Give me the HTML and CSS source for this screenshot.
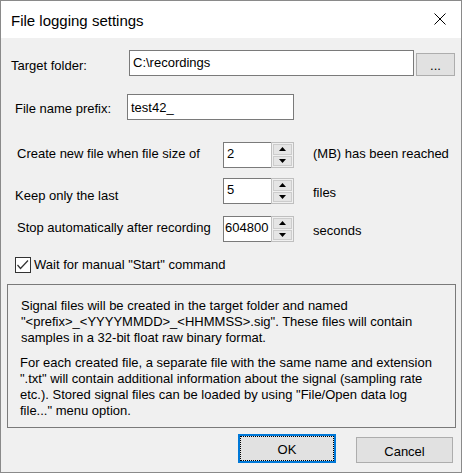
FILE: index.html
```html
<!DOCTYPE html>
<html>
<head>
<meta charset="utf-8">
<link rel="stylesheet" href="styles.css">
</head>
<body>
<div class="window">
  <div class="titlebar">
    <span class="title">File logging settings</span>
    <svg class="close" width="12" height="12" viewBox="0 0 12 12"><path d="M0.5 0.5 L11.5 11.5 M11.5 0.5 L0.5 11.5" stroke="#000" stroke-width="1" fill="none"/></svg>
  </div>
  <div class="content">
    <div class="row row1">
      <span class="lbl lbl-target">Target folder:</span>
      <div class="field field-target">C:\recordings</div>
      <div class="btn browse">...</div>
    </div>
    <div class="row row2">
      <span class="lbl lbl-prefix">File name prefix:</span>
      <div class="field field-prefix">test42_</div>
    </div>
    <div class="row row3">
      <span class="lbl lbl-size">Create new file when file size of</span>
      <div class="spin">
        <span class="spin-val">2</span>
        <span class="spin-btns">
          <span class="sb"><svg width="7" height="4" viewBox="0 0 7 4"><polygon points="0,4 3.5,0 7,4" fill="#000"/></svg></span>
          <span class="sb"><svg width="7" height="4" viewBox="0 0 7 4"><polygon points="0,0 7,0 3.5,4" fill="#000"/></svg></span>
        </span>
      </div>
      <span class="suffix suffix-size">(MB) has been reached</span>
    </div>
    <div class="row row4">
      <span class="lbl lbl-keep">Keep only the last</span>
      <div class="spin">
        <span class="spin-val">5</span>
        <span class="spin-btns">
          <span class="sb"><svg width="7" height="4" viewBox="0 0 7 4"><polygon points="0,4 3.5,0 7,4" fill="#000"/></svg></span>
          <span class="sb"><svg width="7" height="4" viewBox="0 0 7 4"><polygon points="0,0 7,0 3.5,4" fill="#000"/></svg></span>
        </span>
      </div>
      <span class="suffix suffix-keep">files</span>
    </div>
    <div class="row row5">
      <span class="lbl lbl-stop">Stop automatically after recording</span>
      <div class="spin">
        <span class="spin-val tight">604800</span>
        <span class="spin-btns">
          <span class="sb"><svg width="7" height="4" viewBox="0 0 7 4"><polygon points="0,4 3.5,0 7,4" fill="#000"/></svg></span>
          <span class="sb"><svg width="7" height="4" viewBox="0 0 7 4"><polygon points="0,0 7,0 3.5,4" fill="#000"/></svg></span>
        </span>
      </div>
      <span class="suffix suffix-stop">seconds</span>
    </div>
    <div class="check-row">
      <span class="checkbox"><svg width="14" height="14" viewBox="0 0 14 14"><polyline points="1.5,7 4.5,10.5 12,2.5" fill="none" stroke="#333" stroke-width="1.2"/></svg></span>
      <span class="check-label">Wait for manual "Start" command</span>
    </div>
    <div class="info">
      <p class="p1">Signal files will be created in the target folder and named<br>"&lt;prefix&gt;_&lt;YYYYMMDD&gt;_&lt;HHMMSS&gt;.sig". These files will contain<br>samples in a 32-bit float raw binary format.</p>
      <p class="p2">For each created file, a separate file with the same name and extension<br>".txt" will contain additional information about the signal (sampling rate<br>etc.). Stored signal files can be loaded by using "File/Open data log<br>file..." menu option.</p>
    </div>
    <div class="buttons">
      <div class="btn ok"><span class="focus">OK</span></div>
      <div class="btn cancel">Cancel</div>
    </div>
  </div>
</div>
</body>
</html>
```
FILE: styles.css
```css
* { box-sizing: border-box; }
html, body { margin: 0; padding: 0; background: #f0f0f0; }
body {
  font-family: "Liberation Sans", Arial, sans-serif;
  font-size: 13px;
  line-height: 15px;
  color: #000;
}
.window {
  width: 462px;
  height: 473px;
  border: 1px solid #8a8a8a;
  display: flex;
  flex-direction: column;
  background: #f0f0f0;
}
.titlebar {
  height: 37px;
  background: #fff;
  display: flex;
  align-items: flex-start;
  flex: none;
}
.title {
  font-size: 15px;
  line-height: 17px;
  padding-top: 11px;
  padding-left: 10px;
}
.close {
  margin-left: auto;
  margin-top: 12px;
  margin-right: 15px;
}
.content {
  flex: 1;
  display: flex;
  flex-direction: column;
  background: #f0f0f0;
}
.row {
  display: flex;
  align-items: flex-start;
  height: 26px;
  flex: none;
}
.row1 { margin-top: 12px; }
.row2 { margin-top: 18px; }
.row3 { margin-top: 22px; }
.row4 { margin-top: 10px; }
.row5 { margin-top: 12px; }
.lbl { flex: none; white-space: nowrap; }
.lbl-target { margin-left: 10px; width: 118px; margin-top: 8px; }
.lbl-prefix { margin-left: 14px; width: 112px; margin-top: 7px; }
.lbl-size { margin-left: 16px; width: 206px; margin-top: 4px; }
.lbl-keep { margin-left: 14px; width: 208px; margin-top: 10px; }
.lbl-stop { margin-left: 16px; width: 206px; margin-top: 4px; }
.field {
  height: 26px;
  border: 1px solid #7a7a7a;
  background: #fff;
  padding-left: 3px;
  white-space: nowrap;
  flex: none;
}
.field-target { width: 285px; padding-top: 4px; }
.field-prefix { width: 167px; padding-top: 5px; }
.btn {
  background: #e1e1e1;
  border: 1px solid #adadad;
  display: flex;
  align-items: center;
  justify-content: center;
  flex: none;
}
.browse {
  width: 39px;
  height: 23px;
  margin-left: 2px;
  margin-top: 3px;
  padding-top: 2px;
}
.spin {
  width: 71px;
  height: 26px;
  display: flex;
  flex: none;
}
.spin-val {
  flex: 1;
  border: 1px solid #7a7a7a;
  border-right: none;
  background: #fff;
  padding-left: 3px;
  padding-top: 3px;
  overflow: hidden;
  white-space: nowrap;
}
.spin-val.tight { padding-left: 1px; }
.spin-btns {
  width: 23px;
  border: 1px solid #bfbfbf;
  background: #f0f0f0;
  display: flex;
  flex-direction: column;
  padding: 1px;
  gap: 1px;
}
.sb {
  flex: 1;
  background: #e5e5e5;
  border: 1px solid #cccccc;
  display: flex;
  align-items: center;
  justify-content: center;
}
.suffix { margin-left: 19px; white-space: nowrap; }
.suffix-size { margin-top: 4px; }
.suffix-keep { margin-top: 7px; }
.suffix-stop { margin-top: 7px; }
.check-row {
  display: flex;
  align-items: flex-start;
  margin-top: 15px;
  margin-left: 14px;
  height: 16px;
  flex: none;
}
.checkbox {
  width: 16px;
  height: 16px;
  border: 1px solid #333;
  background: #fff;
  display: flex;
  align-items: center;
  justify-content: center;
  flex: none;
}
.check-label { margin-left: 3px; white-space: nowrap; }
.info {
  margin-top: 11px;
  margin-left: 6px;
  width: 449px;
  height: 144px;
  border: 1px solid #7a7a7a;
  padding-left: 12px;
  padding-top: 13px;
  line-height: 16px;
  flex: none;
  white-space: nowrap;
}
.info p { margin: 0; }
.p1 { margin-left: 1px !important; }
.p2 { margin-top: 9px !important; }
.buttons {
  display: flex;
  align-items: flex-end;
  justify-content: flex-end;
  margin-top: 6px;
  margin-right: 8px;
  flex: none;
}
.ok {
  width: 98px;
  height: 29px;
  border: 2px solid #0078d7;
  align-items: stretch;
}
.focus {
  flex: 1;
  border: 1px dotted #000;
  display: flex;
  align-items: center;
  justify-content: center;
  padding-top: 2px;
}
.cancel {
  width: 97px;
  height: 26px;
  margin-left: 20px;
  padding-top: 2px;
}
```
